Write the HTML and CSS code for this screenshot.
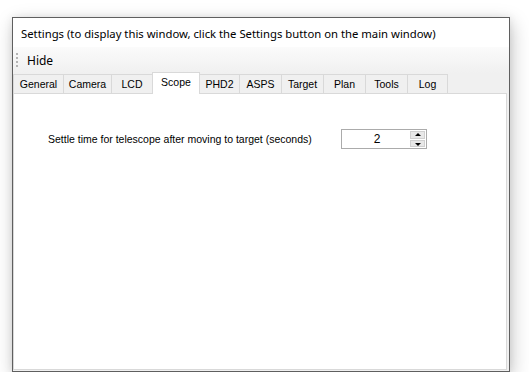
FILE: index.html
```html
<!DOCTYPE html>
<html lang="en">
<head>
    <meta charset="UTF-8">
    <title>Settings</title>
    <link rel="stylesheet" href="styles.css">
</head>
<body>
    <div class="window">
        <div class="titlebar">Settings (to display this window, click the Settings button on the main window)</div>

        <div class="menubar">
            <span class="grip"></span>
            <span class="menu-item">Hide</span>
        </div>

        <div class="tabstrip">
            <div class="tab first w51">General</div>
            <div class="tab w49">Camera</div>
            <div class="tab w42">LCD</div>
            <div class="tab active w48">Scope</div>
            <div class="tab w41">PHD2</div>
            <div class="tab w43">ASPS</div>
            <div class="tab w43">Target</div>
            <div class="tab w43">Plan</div>
            <div class="tab w43">Tools</div>
            <div class="tab w41">Log</div>
        </div>

        <div class="page">
            <div class="row">
                <label class="label">Settle time for telescope after moving to target (seconds)</label>
                <div class="spinner">
                    <span class="value">2</span>
                    <div class="spin">
                        <span class="spin-btn up"></span>
                        <span class="spin-btn down"></span>
                    </div>
                </div>
            </div>
        </div>
    </div>
</body>
</html>
```

FILE: styles.css
```css
body {
    margin: 0;
    background: #ffffff;
    font-family: "Liberation Sans", Arial, sans-serif;
    color: #000;
}
.window {
    margin: 17px 0 0 12px;
    width: 496px;
    height: 353px;
    border: 1px solid #5f5f5f;
    background: #f0f0f0;
    box-shadow: 2px 6px 18px rgba(0, 0, 0, 0.22), 0 0 8px rgba(0, 0, 0, 0.08);
    display: flex;
    flex-direction: column;
}
.titlebar {
    height: 29px;
    line-height: 31px;
    background: #ffffff;
    padding-left: 8px;
    font-family: "Noto Sans", "Open Sans", sans-serif;
    font-size: 11.3px;
    color: #000;
    white-space: nowrap;
}
.menubar {
    height: 26px;
    display: flex;
    align-items: center;
    background: linear-gradient(#fbfbfb, #f0f0f0);
}
.grip {
    width: 2px;
    height: 14px;
    margin-left: 3px;
    background: repeating-linear-gradient(#b4b4b4 0 2px, transparent 2px 4px);
}
.menu-item {
    margin-left: 9px;
    font-family: "Noto Sans", "Open Sans", sans-serif;
    font-size: 12px;
}
.tabstrip {
    display: flex;
    align-items: flex-end;
    height: 20px;
}
.tab {
    box-sizing: border-box;
    height: 19px;
    line-height: 18px;
    text-align: center;
    font-size: 10.5px;
    background: #f0f0f0;
    border: 1px solid #d9d9d9;
    border-bottom: none;
    margin-left: -1px;
}
.tab.first {
    margin-left: 0;
}
.tab.active {
    height: 22px;
    line-height: 19px;
    background: #ffffff;
    margin-bottom: -1px;
    position: relative;
    z-index: 1;
}
.w41 { width: 41px; }
.w42 { width: 42px; }
.w43 { width: 43px; }
.w48 { width: 48px; }
.w49 { width: 49px; }
.w51 { width: 51px; }
.page {
    flex: 1;
    margin: 0 2px 1px 0;
    background: #ffffff;
    border: 1px solid #d9d9d9;
    padding-top: 35px;
}
.row {
    display: flex;
    align-items: center;
    padding-left: 34px;
}
.label {
    font-size: 10.5px;
    width: 293px;
}
.spinner {
    width: 84px;
    height: 18px;
    border: 1px solid #ababab;
    display: flex;
    align-items: center;
}
.value {
    flex: 1;
    text-align: center;
    font-size: 12px;
    padding-left: 2px;
}
.spin {
    width: 15px;
    height: 16px;
    margin-right: 1px;
    display: flex;
    flex-direction: column;
    gap: 1px;
}
.spin-btn {
    flex: 1;
    background: #e8e8e8;
    border: 1px solid #d0d0d0;
    position: relative;
}
.spin-btn::after {
    content: "";
    position: absolute;
    left: 4px;
    top: 1px;
    border-left: 3px solid transparent;
    border-right: 3px solid transparent;
}
.spin-btn.up::after {
    border-bottom: 3px solid #000;
}
.spin-btn.down::after {
    top: 2px;
    border-top: 3px solid #000;
}
```
